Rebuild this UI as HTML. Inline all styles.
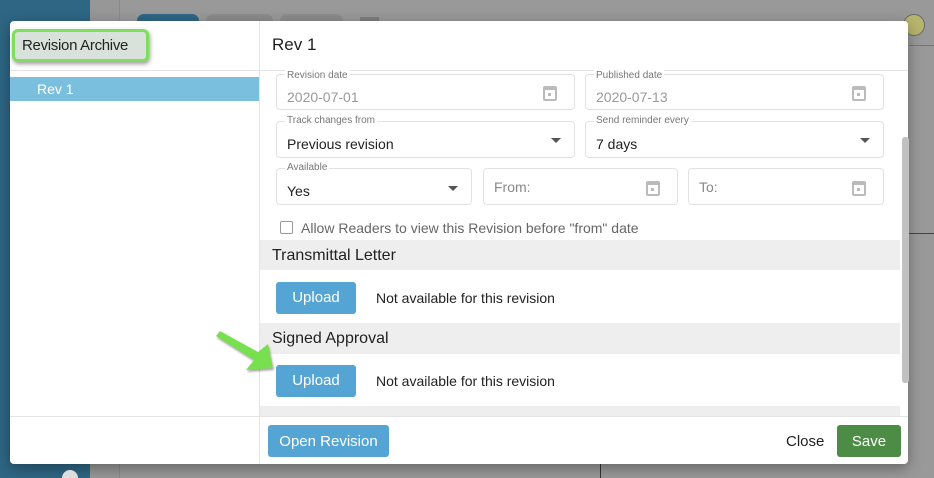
<!DOCTYPE html>
<html><head><meta charset="utf-8"><style>
*{box-sizing:border-box;margin:0;padding:0}
html{width:934px;height:478px;overflow:hidden}
body{width:934px;height:478px;overflow:hidden;position:relative;background:#999;font-family:"Liberation Sans",sans-serif;color:#222}
.a{position:absolute}
.fld{position:absolute;border:1px solid #e2e2e2;border-radius:4px;background:#fff}
.lbl{position:absolute;top:-7px;left:8px;background:#fff;padding:0 2px;font-size:10px;color:#777;line-height:12px}
.val{position:absolute;left:10px;font-size:14px}
.cal{position:absolute;width:14px;height:15px;border:2px solid #bbb;border-top-width:4px;border-radius:2px}
.cal:after{content:"";position:absolute;left:3px;top:3px;width:3px;height:3px;background:#bbb}
.dd{position:absolute;width:0;height:0;border-left:5px solid transparent;border-right:5px solid transparent;border-top:5px solid #555}
.btn{position:absolute;background:#54a5d4;color:#fff;border-radius:3px;font-size:15px;text-align:center}
.band{position:absolute;left:260px;width:640px;background:#eeeeee;font-size:16px;padding-left:12px}
</style></head><body>
<div class="a" style="left:0;top:0;width:90px;height:478px;background:#2e6684"></div>
<div class="a" style="left:90px;top:0;width:30px;height:478px;background:#979797;border-right:1px solid #8a8a8a"></div>
<div class="a" style="left:137px;top:14px;width:62px;height:14px;background:#2e6684;border-radius:10px"></div>
<div class="a" style="left:206px;top:14px;width:67px;height:14px;background:#8c8c8c;border-radius:10px"></div>
<div class="a" style="left:280px;top:14px;width:63px;height:14px;background:#8c8c8c;border-radius:10px"></div>
<div class="a" style="left:360px;top:17px;width:19px;height:10px;background:#7d7d7d"></div>
<div class="a" style="left:903px;top:14px;width:22px;height:22px;border-radius:50%;background:#b8b56e;border:1px solid #666"></div>
<div class="a" style="left:600px;top:464px;width:1px;height:14px;background:#333"></div>
<div class="a" style="left:909px;top:45px;width:25px;height:1px;background:#777"></div>
<div class="a" style="left:909px;top:233px;width:25px;height:1px;background:#444"></div>

<div class="a" style="left:10px;top:21px;width:898px;height:443px;background:#fff;border-radius:4px;box-shadow:0 4px 14px rgba(0,0,0,.35)"></div>
<div class="a" style="left:259px;top:21px;width:1px;height:443px;background:#e4e4e4"></div>
<div class="a" style="left:10px;top:70px;width:898px;height:1px;background:#e4e4e4"></div>
<div class="a" style="left:10px;top:416px;width:898px;height:1px;background:#e4e4e4"></div>

<div class="a" style="left:12px;top:29px;width:137px;height:33px;border:3px solid #7ee05a;border-radius:6px;background:#d9e2da;box-shadow:1px 2px 4px rgba(0,0,0,.4);font-size:15px;line-height:27px;padding-left:7px;color:#222;white-space:nowrap;letter-spacing:-0.3px">Revision Archive</div>
<div class="a" style="left:272px;top:35px;font-size:17px">Rev 1</div>
<div class="a" style="left:10px;top:77px;width:249px;height:24px;background:#7bbfde;color:#fff;font-size:14px;line-height:25px;padding-left:27px">Rev 1</div>

<div class="fld" style="left:276px;top:74px;width:299px;height:36px"><span class="lbl" style="top:-5px">Revision date</span><span class="val" style="top:14px;color:#999">2020-07-01</span><span class="cal" style="right:17px;top:11px"></span></div>
<div class="fld" style="left:585px;top:74px;width:299px;height:36px"><span class="lbl" style="top:-5px">Published date</span><span class="val" style="top:14px;color:#999">2020-07-13</span><span class="cal" style="right:17px;top:11px"></span></div>
<div class="fld" style="left:276px;top:121px;width:299px;height:37px"><span class="lbl">Track changes from</span><span class="val" style="top:14px">Previous revision</span><span class="dd" style="right:13px;top:16px"></span></div>
<div class="fld" style="left:585px;top:121px;width:299px;height:37px"><span class="lbl">Send reminder every</span><span class="val" style="top:14px">7 days</span><span class="dd" style="right:13px;top:16px"></span></div>
<div class="fld" style="left:276px;top:168px;width:196px;height:37px"><span class="lbl">Available</span><span class="val" style="top:14px">Yes</span><span class="dd" style="right:13px;top:17px"></span></div>
<div class="fld" style="left:483px;top:168px;width:195px;height:37px"><span class="val" style="top:10px;color:#888">From:</span><span class="cal" style="right:17px;top:12px"></span></div>
<div class="fld" style="left:688px;top:168px;width:196px;height:37px"><span class="val" style="top:10px;color:#888">To:</span><span class="cal" style="right:17px;top:12px"></span></div>
<div class="a" style="left:280px;top:221px;width:13px;height:13px;border:1.5px solid #999;border-radius:2px"></div>
<div class="a" style="left:301px;top:220px;font-size:14px;color:#666">Allow Readers to view this Revision before "from" date</div>

<div class="band" style="top:240px;height:30px;line-height:31px">Transmittal Letter</div>
<div class="btn" style="left:276px;top:282px;width:80px;height:32px;line-height:32px">Upload</div>
<div class="a" style="left:376px;top:290px;font-size:14px">Not available for this revision</div>
<div class="band" style="top:323px;height:31px;line-height:32px">Signed Approval</div>
<div class="btn" style="left:276px;top:365px;width:80px;height:32px;line-height:32px">Upload</div>
<div class="a" style="left:376px;top:373px;font-size:14px">Not available for this revision</div>
<div class="band" style="top:406px;height:10px"></div>
<div class="a" style="left:902px;top:137px;width:7px;height:246px;background:#c1c1c1;border-radius:3px"></div>

<svg class="a" style="left:205px;top:325px" width="80" height="55"><g transform="translate(-205,-325)" style="filter:drop-shadow(1px 2px 1px rgba(0,0,0,.35))"><polygon points="216,336 220,331 258,352 268,344 273,368 246,370 254,360" fill="#78e04e"/></g></svg>

<div class="btn" style="left:268px;top:425px;width:121px;height:32px;line-height:33px">Open Revision</div>
<div class="a" style="left:786px;top:433px;font-size:15px">Close</div>
<div class="a" style="left:837px;top:425px;width:64px;height:32px;background:#4d8c45;color:#fff;border-radius:3px;font-size:15px;line-height:34px;text-align:center">Save</div>
<div class="a" style="left:62px;top:470px;width:16px;height:8px;border-radius:8px 8px 0 0;background:#ddd"></div>
</body></html>
